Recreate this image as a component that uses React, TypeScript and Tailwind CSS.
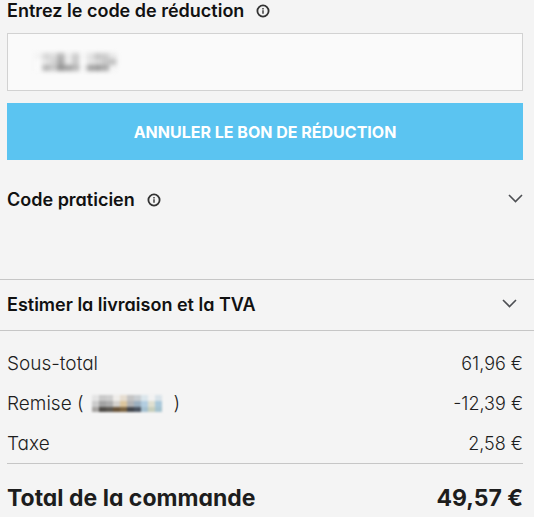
import React, { useState } from "react";

type RowProps = {
  label: React.ReactNode;
  value: string;
};

const discountPixels = [
  "#f2f2f2", "#d6d6d6", "#dcdcdc", "#b4b4b4", "#ececec", "#cccccc", "#f6f6f6", "#e2e2e2", "#c6c6c6", "#cccccc", "#e8e8e8",
  "#fafafa", "#e6e6e6", "#d4d4d4", "#a8a8a8", "#ececec", "#cacaca", "#fafafa", "#e6e6e6", "#dadada", "#c8c8c8", "#c0c0c0",
  "#fafafa", "#b4b4b4", "#c6c6c6", "#929292", "#a0a0a0", "#b4b4b4", "#f4f4f4", "#a0a0a0", "#989898", "#a8a8a8", "#f4f4f4",
];

const remisePixels = [
  "#e4e4e4", "#c9c9c9", "#cecece", "#efedea", "#e6ddd0", "#c4c4c4", "#c9ced2", "#dbe6ec", "#f2f2f2", "#d9e3e9",
  "#cccccc", "#a3a3a3", "#adadad", "#d4d1cd", "#dcc69e", "#b0b2b5", "#9bafbf", "#b2cde0", "#dfdfd0", "#a9c8da",
  "#a8a6a4", "#504d49", "#5b5751", "#69543a", "#7b6442", "#42464c", "#4a5360", "#a5c0d0", "#c8cfbc", "#a5c3cf",
];

function InfoIcon() {
  return (
    <svg viewBox="0 0 14 14" className="size-3.5 shrink-0" fill="none" aria-hidden="true">
      <circle cx="7" cy="7" r="5.6" stroke="#333" strokeWidth="1.8" />
      <path d="M7 6.2v3.6M7 4v1.4" stroke="#555" strokeWidth="1.7" />
    </svg>
  );
}

function Chevron() {
  return (
    <svg viewBox="0 0 15 9" className="mb-[3px] h-[9px] w-[15px] shrink-0" fill="none" aria-hidden="true">
      <path d="M1 1l6.5 6.5L14 1" stroke="#4d4f53" strokeWidth="1.6" />
    </svg>
  );
}

function Row({ label, value }: RowProps) {
  return (
    <tr className="h-10">
      <th scope="row" className="pt-[2px] text-left text-[19px] font-light">{label}</th>
      <td className="pt-[2px] text-right">{value}</td>
    </tr>
  );
}

function App() {
  const [code, setCode] = useState("");

  return (
    <main className="min-h-screen bg-[#f4f4f4] font-['Inter','Lato',sans-serif] text-lg font-light text-[#1d1d1d] [font-feature-settings:'cv11']">
      <section className="pl-[7px] pr-[11px]">
        <label htmlFor="discount" className="flex h-[33px] items-start gap-3 pt-px text-lg/5 font-semibold text-[#111]">
          Entrez le code de réduction
          <span className="pt-[3px]"><InfoIcon /></span>
        </label>
        <div className="relative">
          <input
            id="discount"
            value={code}
            onChange={(e) => setCode(e.target.value)}
            className="block h-[58px] w-full border border-[#d2d2d2] bg-[#fafafa] px-7 outline-none"
          />
          <svg viewBox="0 0 82 18" className="pointer-events-none absolute left-7 top-5 h-[18px] w-[82px] blur-[2px]" aria-hidden="true">
            {discountPixels.map((fill, i) => (
              <rect key={i} x={(i % 11) * 7.4} y={Math.floor(i / 11) * 6} width="7.5" height="6" fill={fill} />
            ))}
          </svg>
        </div>
        <button className="mt-3 block h-[57px] w-full bg-[#5bc4f1] text-base font-bold uppercase text-white">
          Annuler le bon de réduction
        </button>
        <button className="flex h-20 w-full items-center justify-between text-left font-semibold text-[#111]">
          <span className="flex items-center gap-3">
            Code praticien
            <InfoIcon />
          </span>
          <Chevron />
        </button>
      </section>

      <button className="mt-[39px] flex h-13 w-full items-center justify-between border-y border-[#c6c6c6] pl-[7px] pr-[17px] text-left font-semibold text-[#111]">
        Estimer la livraison et la TVA
        <Chevron />
      </button>

      <section className="pl-[7px] pr-[11px] pt-3">
        <table className="w-full border-collapse">
          <tbody>
            <Row label="Sous-total" value="61,96 €" />
            <Row
              label={
                <span className="flex items-center">
                  Remise (
                  <svg viewBox="0 0 70 17" className="ml-2 mr-3 h-[17px] w-[70px] blur-[1px]" aria-hidden="true">
                    {remisePixels.map((fill, i) => (
                      <rect key={i} x={(i % 10) * 7} y={Math.floor(i / 10) * 6} width="7.5" height="6" fill={fill} />
                    ))}
                  </svg>
                  )
                </span>
              }
              value="-12,39 €"
            />
            <Row label="Taxe" value="2,58 €" />
          </tbody>
          <tfoot>
            <tr className="h-[54px] border-t border-[#c6c6c6] text-[23px]/8 font-bold">
              <th scope="row" className="pt-4 text-left font-bold">Total de la commande</th>
              <td className="pt-4 text-right">49,57 €</td>
            </tr>
          </tfoot>
        </table>
      </section>
    </main>
  );
}

export default App;
